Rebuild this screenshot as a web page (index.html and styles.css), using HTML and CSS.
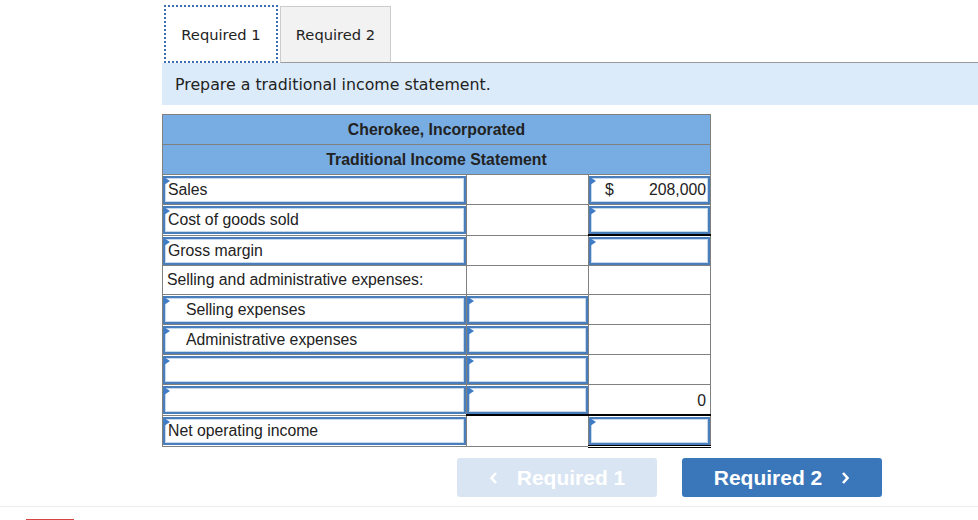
FILE: index.html
```html
<!DOCTYPE html>
<html>
<head>
<meta charset="utf-8">
<link rel="stylesheet" href="styles.css">
</head>
<body>
<div class="page">
  <div class="main">
    <div class="tabs">
      <div class="tab active">Required 1</div>
      <div class="tab">Required 2</div>
      <div class="tab-fill"></div>
    </div>
    <div class="band">Prepare a traditional income statement.</div>
    <table class="stmt">
      <colgroup><col class="c1"><col class="c2"><col class="c3"></colgroup>
      <tr class="hd"><td colspan="3">Cherokee, Incorporated</td></tr>
      <tr class="hd"><td colspan="3">Traditional Income Statement</td></tr>
      <tr>
        <td class="in"><div class="box">Sales</div></td>
        <td></td>
        <td class="in"><div class="box money"><span>$</span><span>208,000</span></div></td>
      </tr>
      <tr>
        <td class="in"><div class="box">Cost of goods sold</div></td>
        <td></td>
        <td class="in under"><div class="box"></div></td>
      </tr>
      <tr>
        <td class="in"><div class="box">Gross margin</div></td>
        <td></td>
        <td class="in"><div class="box"></div></td>
      </tr>
      <tr>
        <td class="txt">Selling and administrative expenses:</td>
        <td></td>
        <td></td>
      </tr>
      <tr>
        <td class="in"><div class="box indent">Selling expenses</div></td>
        <td class="in"><div class="box"></div></td>
        <td></td>
      </tr>
      <tr>
        <td class="in"><div class="box indent">Administrative expenses</div></td>
        <td class="in"><div class="box"></div></td>
        <td></td>
      </tr>
      <tr>
        <td class="in"><div class="box"></div></td>
        <td class="in"><div class="box"></div></td>
        <td></td>
      </tr>
      <tr>
        <td class="in"><div class="box"></div></td>
        <td class="in under"><div class="box"></div></td>
        <td class="num under">0</td>
      </tr>
      <tr>
        <td class="in"><div class="box">Net operating income</div></td>
        <td></td>
        <td class="in dbl"><div class="box"></div></td>
      </tr>
    </table>
    <div class="nav">
      <div class="btn disabled">
        <svg class="chev" width="10" height="14" viewBox="0 0 10 14"><polyline points="7,2 2.5,7 7,12" fill="none" stroke="#fff" stroke-width="2.6"/></svg>
        <span>Required 1</span>
      </div>
      <div class="btn primary">
        <span>Required 2</span>
        <svg class="chev" width="10" height="14" viewBox="0 0 10 14"><polyline points="3,2 7.5,7 3,12" fill="none" stroke="#fff" stroke-width="2.6"/></svg>
      </div>
    </div>
  </div>
  <div class="foot-line"></div>
  <div class="red-bar"></div>
</div>
</body>
</html>
```

FILE: styles.css
```css
html, body {
  margin: 0;
  padding: 0;
  background: #fff;
}
.page {
  width: 978px;
  height: 520px;
  overflow: hidden;
}
.main {
  margin-left: 162px;
  padding-top: 5px;
}
.tabs {
  display: flex;
  align-items: flex-end;
  height: 58px;
  font-family: "DejaVu Sans", Verdana, sans-serif;
  font-size: 14.7px;
  color: #222;
}
.tab {
  box-sizing: border-box;
  height: 57px;
  display: flex;
  align-items: center;
  justify-content: center;
  background: #f2f2f2;
  border: 1px solid #cccccc;
  border-bottom: 1px solid #9a9a9a;
  width: 111px;
  margin-left: 2px;
}
.tab.active {
  height: 58px;
  width: 114px;
  margin-left: 2px;
  background: #fff;
  border: 2px dotted #3b6fb3;
}
.tab-fill {
  flex: 1;
  border-bottom: 1px solid #9a9a9a;
}
.band {
  height: 42px;
  background: #dcebf9;
  display: flex;
  align-items: center;
  padding-left: 13px;
  font-family: "DejaVu Sans", Verdana, sans-serif;
  font-size: 15.8px;
  color: #222;
}
.stmt {
  margin-top: 9px;
  border-collapse: collapse;
  width: 548px;
  table-layout: fixed;
  font-family: "Liberation Sans", Arial, sans-serif;
  font-size: 15.8px;
  color: #222;
}
.c1 { width: 304px; }
.c2 { width: 122px; }
.c3 { width: 122px; }
.stmt td {
  border: 1px solid #808080;
  height: 29px;
  padding: 0;
  box-sizing: border-box;
}
.stmt .hd td {
  background: #78ade3;
  text-align: center;
  font-weight: bold;
  height: 30px;
}
.stmt td.txt {
  padding-left: 4px;
}
.stmt td.num {
  text-align: right;
  padding-right: 4px;
  padding-top: 2px;
}
.stmt td.in {
  padding: 1px 0 0 0;
  vertical-align: top;
}
.box {
  position: relative;
  box-sizing: border-box;
  height: 28px;
  border: 2px solid #4a7ebb;
  box-shadow: inset 0 0 0 1px #c5d8f0;
  display: flex;
  align-items: center;
  padding-left: 3px;
  padding-right: 2px;
}
.box::before {
  content: "";
  position: absolute;
  left: -1px;
  top: -1px;
  border-top: 4px solid transparent;
  border-bottom: 4px solid transparent;
  border-left: 6px solid #3f7cc5;
}
.box.indent {
  padding-left: 21px;
}
.box.money {
  justify-content: space-between;
  padding-left: 14px;
}
.stmt td.under {
  border-bottom: 2px solid #000;
}
.stmt td.dbl {
  border-bottom: 3px double #000;
}
.nav {
  display: flex;
  gap: 25px;
  margin-top: 10px;
  padding-left: 295px;
}
.btn {
  box-sizing: border-box;
  width: 200px;
  height: 39px;
  border-radius: 3px;
  display: flex;
  align-items: center;
  justify-content: center;
  gap: 18px;
  font-family: "Liberation Sans", Arial, sans-serif;
  font-size: 21px;
  font-weight: bold;
  color: #fff;
}
.btn.disabled {
  background: #d9e5f2;
}
.btn.primary {
  background: #3a76ba;
}
.chev {
  display: block;
}
.foot-line {
  margin-top: 9px;
  height: 1px;
  background: #ececec;
}
.red-bar {
  margin-top: 12px;
  margin-left: 26px;
  width: 48px;
  height: 1px;
  background: #d64541;
}
```
